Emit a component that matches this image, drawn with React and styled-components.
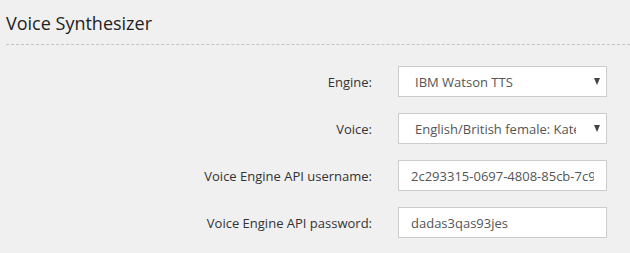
import styled, { createGlobalStyle } from "styled-components";

const Global = createGlobalStyle`
  html, body {
    margin: 0;
    padding: 0;
    background: #f0f0f0;
    font-family: "Open Sans", "Liberation Sans", sans-serif;
    color: #333;
  }
`;

const Section = styled.section`
  width: 630px;
  height: 253px;
  padding-left: 6px;
  box-sizing: border-box;
  overflow: hidden;
`;

const Title = styled.h2`
  margin: 0;
  padding-top: 12px;
  padding-bottom: 10px;
  font-size: 18px;
  font-weight: 400;
  line-height: 22px;
  color: #222;
  border-bottom: 1px dashed #c4c4c4;
`;

const Form = styled.div`
  display: grid;
  grid-template-columns: 366px 209px;
  column-gap: 26px;
  row-gap: 16px;
  padding-top: 21px;
  align-items: center;
`;

const Label = styled.label`
  text-align: right;
  font-size: 13px;
  color: #333;
`;

const Field = styled.div`
  position: relative;
  box-sizing: border-box;
  height: 31px;
  background: #fff;
  border: 1px solid #cccccc;
  display: flex;
  align-items: center;
  padding-left: ${(p) => (p.$select ? "16px" : "12px")};
  padding-right: ${(p) => (p.$select ? "30px" : "12px")};
  font-size: 13px;
  color: #555;
  white-space: nowrap;
  overflow: hidden;
`;

const Value = styled.span`
  flex: 1;
  min-width: 0;
  overflow: hidden;
  white-space: nowrap;
`;

const Arrow = styled.span`
  position: absolute;
  right: 6px;
  top: 11px;
  width: 0;
  height: 0;
  border-left: 3.5px solid transparent;
  border-right: 3.5px solid transparent;
  border-top: 7px solid #444;
`;

const rows = [
  { label: "Engine:", value: "IBM Watson TTS", select: true },
  { label: "Voice:", value: "English/British female: Kate", select: true },
  { label: "Voice Engine API username:", value: "2c293315-0697-4808-85cb-7c9a" },
  { label: "Voice Engine API password:", value: "dadas3qas93jes" },
];

export default function App() {
  return (
    <>
      <Global />
      <Section>
        <Title>Voice Synthesizer</Title>
        <Form>
          {rows.map((r) => (
            <>
              <Label key={r.label + "l"}>{r.label}</Label>
              <Field key={r.label + "f"} $select={r.select}>
                <Value>{r.value}</Value>
                {r.select && <Arrow />}
              </Field>
            </>
          ))}
        </Form>
      </Section>
    </>
  );
}
